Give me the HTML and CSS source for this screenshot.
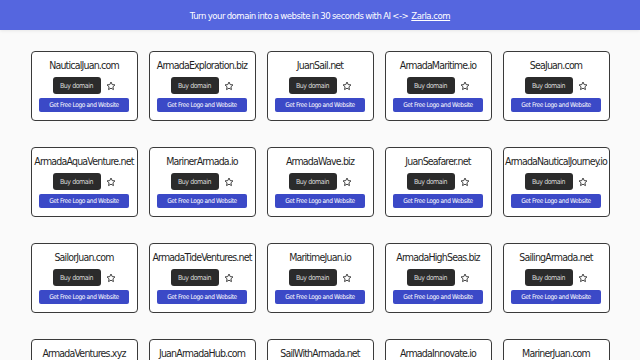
FILE: index.html
```html
<!DOCTYPE html>
<html>
<head>
<meta charset="utf-8">
<link rel="stylesheet" href="styles.css">
</head>
<body>
<div class="banner">Turn your domain into a website in 30 seconds with AI &lt;-&gt; <a href="#">Zarla.com</a></div>
<main class="grid">
  <div class="card"><div class="name">NauticalJuan.com</div><div class="row"><span class="buy">Buy domain</span><svg class="star" viewBox="0 0 24 24"><path d="M12 2.5l2.9 6.1 6.6.8-4.9 4.6 1.3 6.6L12 17.3l-5.9 3.3 1.3-6.6-4.9-4.6 6.6-.8z"/></svg></div><div class="cta">Get Free Logo and Website</div></div>
  <div class="card"><div class="name">ArmadaExploration.biz</div><div class="row"><span class="buy">Buy domain</span><svg class="star" viewBox="0 0 24 24"><path d="M12 2.5l2.9 6.1 6.6.8-4.9 4.6 1.3 6.6L12 17.3l-5.9 3.3 1.3-6.6-4.9-4.6 6.6-.8z"/></svg></div><div class="cta">Get Free Logo and Website</div></div>
  <div class="card"><div class="name">JuanSail.net</div><div class="row"><span class="buy">Buy domain</span><svg class="star" viewBox="0 0 24 24"><path d="M12 2.5l2.9 6.1 6.6.8-4.9 4.6 1.3 6.6L12 17.3l-5.9 3.3 1.3-6.6-4.9-4.6 6.6-.8z"/></svg></div><div class="cta">Get Free Logo and Website</div></div>
  <div class="card"><div class="name">ArmadaMaritime.io</div><div class="row"><span class="buy">Buy domain</span><svg class="star" viewBox="0 0 24 24"><path d="M12 2.5l2.9 6.1 6.6.8-4.9 4.6 1.3 6.6L12 17.3l-5.9 3.3 1.3-6.6-4.9-4.6 6.6-.8z"/></svg></div><div class="cta">Get Free Logo and Website</div></div>
  <div class="card"><div class="name">SeaJuan.com</div><div class="row"><span class="buy">Buy domain</span><svg class="star" viewBox="0 0 24 24"><path d="M12 2.5l2.9 6.1 6.6.8-4.9 4.6 1.3 6.6L12 17.3l-5.9 3.3 1.3-6.6-4.9-4.6 6.6-.8z"/></svg></div><div class="cta">Get Free Logo and Website</div></div>

  <div class="card"><div class="name">ArmadaAquaVenture.net</div><div class="row"><span class="buy">Buy domain</span><svg class="star" viewBox="0 0 24 24"><path d="M12 2.5l2.9 6.1 6.6.8-4.9 4.6 1.3 6.6L12 17.3l-5.9 3.3 1.3-6.6-4.9-4.6 6.6-.8z"/></svg></div><div class="cta">Get Free Logo and Website</div></div>
  <div class="card"><div class="name">MarinerArmada.io</div><div class="row"><span class="buy">Buy domain</span><svg class="star" viewBox="0 0 24 24"><path d="M12 2.5l2.9 6.1 6.6.8-4.9 4.6 1.3 6.6L12 17.3l-5.9 3.3 1.3-6.6-4.9-4.6 6.6-.8z"/></svg></div><div class="cta">Get Free Logo and Website</div></div>
  <div class="card"><div class="name">ArmadaWave.biz</div><div class="row"><span class="buy">Buy domain</span><svg class="star" viewBox="0 0 24 24"><path d="M12 2.5l2.9 6.1 6.6.8-4.9 4.6 1.3 6.6L12 17.3l-5.9 3.3 1.3-6.6-4.9-4.6 6.6-.8z"/></svg></div><div class="cta">Get Free Logo and Website</div></div>
  <div class="card"><div class="name">JuanSeafarer.net</div><div class="row"><span class="buy">Buy domain</span><svg class="star" viewBox="0 0 24 24"><path d="M12 2.5l2.9 6.1 6.6.8-4.9 4.6 1.3 6.6L12 17.3l-5.9 3.3 1.3-6.6-4.9-4.6 6.6-.8z"/></svg></div><div class="cta">Get Free Logo and Website</div></div>
  <div class="card"><div class="name">ArmadaNauticalJourney.io</div><div class="row"><span class="buy">Buy domain</span><svg class="star" viewBox="0 0 24 24"><path d="M12 2.5l2.9 6.1 6.6.8-4.9 4.6 1.3 6.6L12 17.3l-5.9 3.3 1.3-6.6-4.9-4.6 6.6-.8z"/></svg></div><div class="cta">Get Free Logo and Website</div></div>

  <div class="card"><div class="name">SailorJuan.com</div><div class="row"><span class="buy">Buy domain</span><svg class="star" viewBox="0 0 24 24"><path d="M12 2.5l2.9 6.1 6.6.8-4.9 4.6 1.3 6.6L12 17.3l-5.9 3.3 1.3-6.6-4.9-4.6 6.6-.8z"/></svg></div><div class="cta">Get Free Logo and Website</div></div>
  <div class="card"><div class="name">ArmadaTideVentures.net</div><div class="row"><span class="buy">Buy domain</span><svg class="star" viewBox="0 0 24 24"><path d="M12 2.5l2.9 6.1 6.6.8-4.9 4.6 1.3 6.6L12 17.3l-5.9 3.3 1.3-6.6-4.9-4.6 6.6-.8z"/></svg></div><div class="cta">Get Free Logo and Website</div></div>
  <div class="card"><div class="name">MaritimeJuan.io</div><div class="row"><span class="buy">Buy domain</span><svg class="star" viewBox="0 0 24 24"><path d="M12 2.5l2.9 6.1 6.6.8-4.9 4.6 1.3 6.6L12 17.3l-5.9 3.3 1.3-6.6-4.9-4.6 6.6-.8z"/></svg></div><div class="cta">Get Free Logo and Website</div></div>
  <div class="card"><div class="name">ArmadaHighSeas.biz</div><div class="row"><span class="buy">Buy domain</span><svg class="star" viewBox="0 0 24 24"><path d="M12 2.5l2.9 6.1 6.6.8-4.9 4.6 1.3 6.6L12 17.3l-5.9 3.3 1.3-6.6-4.9-4.6 6.6-.8z"/></svg></div><div class="cta">Get Free Logo and Website</div></div>
  <div class="card"><div class="name">SailingArmada.net</div><div class="row"><span class="buy">Buy domain</span><svg class="star" viewBox="0 0 24 24"><path d="M12 2.5l2.9 6.1 6.6.8-4.9 4.6 1.3 6.6L12 17.3l-5.9 3.3 1.3-6.6-4.9-4.6 6.6-.8z"/></svg></div><div class="cta">Get Free Logo and Website</div></div>

  <div class="card"><div class="name">ArmadaVentures.xyz</div><div class="row"><span class="buy">Buy domain</span><svg class="star" viewBox="0 0 24 24"><path d="M12 2.5l2.9 6.1 6.6.8-4.9 4.6 1.3 6.6L12 17.3l-5.9 3.3 1.3-6.6-4.9-4.6 6.6-.8z"/></svg></div><div class="cta">Get Free Logo and Website</div></div>
  <div class="card"><div class="name">JuanArmadaHub.com</div><div class="row"><span class="buy">Buy domain</span><svg class="star" viewBox="0 0 24 24"><path d="M12 2.5l2.9 6.1 6.6.8-4.9 4.6 1.3 6.6L12 17.3l-5.9 3.3 1.3-6.6-4.9-4.6 6.6-.8z"/></svg></div><div class="cta">Get Free Logo and Website</div></div>
  <div class="card"><div class="name">SailWithArmada.net</div><div class="row"><span class="buy">Buy domain</span><svg class="star" viewBox="0 0 24 24"><path d="M12 2.5l2.9 6.1 6.6.8-4.9 4.6 1.3 6.6L12 17.3l-5.9 3.3 1.3-6.6-4.9-4.6 6.6-.8z"/></svg></div><div class="cta">Get Free Logo and Website</div></div>
  <div class="card"><div class="name">ArmadaInnovate.io</div><div class="row"><span class="buy">Buy domain</span><svg class="star" viewBox="0 0 24 24"><path d="M12 2.5l2.9 6.1 6.6.8-4.9 4.6 1.3 6.6L12 17.3l-5.9 3.3 1.3-6.6-4.9-4.6 6.6-.8z"/></svg></div><div class="cta">Get Free Logo and Website</div></div>
  <div class="card"><div class="name">MarinerJuan.com</div><div class="row"><span class="buy">Buy domain</span><svg class="star" viewBox="0 0 24 24"><path d="M12 2.5l2.9 6.1 6.6.8-4.9 4.6 1.3 6.6L12 17.3l-5.9 3.3 1.3-6.6-4.9-4.6 6.6-.8z"/></svg></div><div class="cta">Get Free Logo and Website</div></div>
</main>
</body>
</html>
```
FILE: styles.css
```css
html, body {
  margin: 0;
  padding: 0;
}
body {
  background: #fafafa;
  font-family: "DejaVu Sans Condensed", "DejaVu Sans", sans-serif;
  color: #222;
  overflow: hidden;
  height: 360px;
}
.banner {
  height: 30px;
  background: #5566df;
  color: #fff;
  font-size: 9.5px;
  letter-spacing: -0.48px;
  word-spacing: -0.5px;
  display: flex;
  align-items: center;
  justify-content: center;
  gap: 3px;
  box-shadow: 0 1px 3px rgba(0,0,0,0.08);
}
.banner a {
  color: #fff;
  text-decoration: underline;
}
.grid {
  display: grid;
  grid-template-columns: repeat(5, 107px);
  column-gap: 11px;
  row-gap: 26px;
  justify-content: center;
  padding-top: 21px;
}
.card {
  height: 70px;
  box-sizing: border-box;
  border: 1.5px solid #3a3a3a;
  border-radius: 4px;
  background: #fff;
  display: flex;
  flex-direction: column;
  align-items: center;
  padding-top: 6px;
}
.name {
  font-size: 10.5px;
  line-height: 14px;
  letter-spacing: -0.8px;
  color: #1f1f1f;
  white-space: nowrap;
}
.row {
  display: flex;
  align-items: center;
  gap: 5px;
  margin-top: 5px;
}
.buy {
  background: #2b2b2b;
  color: #dcdcdc;
  font-size: 7px;
  height: 17px;
  width: 48px;
  border-radius: 3px;
  display: flex;
  align-items: center;
  justify-content: center;
  letter-spacing: -0.45px;
}
.star {
  width: 10px;
  height: 10px;
  fill: none;
  stroke: #333;
  stroke-width: 2.2;
  stroke-linejoin: round;
}
.cta {
  margin-top: 4px;
  width: 90px;
  height: 14px;
  background: #3b49c7;
  color: #fff;
  font-size: 6.5px;
  border-radius: 2px;
  display: flex;
  align-items: center;
  justify-content: center;
  letter-spacing: -0.35px;
}
```
